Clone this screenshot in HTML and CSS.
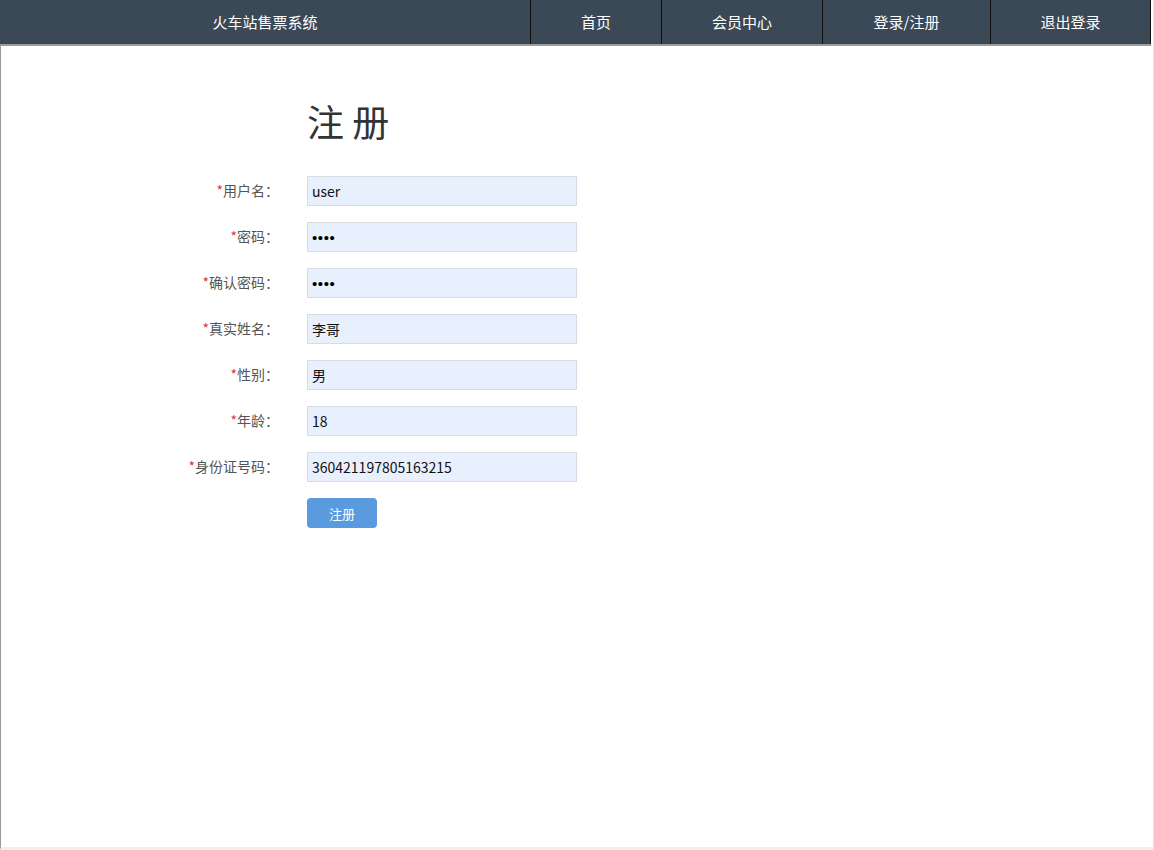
FILE: index.html
```html
<!DOCTYPE html>
<html lang="zh-CN">
<head>
<meta charset="utf-8">
<title>火车站售票系统</title>
<link rel="stylesheet" href="styles.css">
</head>
<body>
<div class="frame">
  <header class="topbar">
    <div class="brand">火车站售票系统</div>
    <nav class="nav">
      <a class="nav-item w-home">首页</a>
      <a class="nav-item w-member">会员中心</a>
      <a class="nav-item w-login">登录/注册</a>
      <a class="nav-item w-logout">退出登录</a>
    </nav>
  </header>
  <main class="content">
    <h1 class="title">注 册</h1>
    <form class="form">
      <div class="row"><label class="label"><span class="req">*</span>用户名：</label><input class="field" type="text" value="user"></div>
      <div class="row"><label class="label"><span class="req">*</span>密码：</label><input class="field pw" type="password" value="1234"></div>
      <div class="row"><label class="label"><span class="req">*</span>确认密码：</label><input class="field pw" type="password" value="1234"></div>
      <div class="row"><label class="label"><span class="req">*</span>真实姓名：</label><input class="field" type="text" value="李哥"></div>
      <div class="row"><label class="label"><span class="req">*</span>性别：</label><input class="field" type="text" value="男"></div>
      <div class="row"><label class="label"><span class="req">*</span>年龄：</label><input class="field" type="text" value="18"></div>
      <div class="row"><label class="label"><span class="req">*</span>身份证号码：</label><input class="field" type="text" value="360421197805163215"></div>
      <div class="row"><span class="label"></span><button class="btn" type="button">注册</button></div>
    </form>
  </main>
</div>
</body>
</html>
```

FILE: styles.css
```css
* { box-sizing: border-box; }
html, body { margin: 0; padding: 0; background: #fff; }
body {
  font-family: "Noto Sans CJK SC", "Noto Sans", sans-serif;
  width: 1154px;
  height: 850px;
  overflow: hidden;
}
.frame {
  width: 1154px;
  height: 850px;
  border-left: 1px solid #9a9a9a;
  border-right: 1px solid #e4e4e4;
  border-bottom: 3px solid #efefef;
  display: flex;
  flex-direction: column;
}
.topbar {
  display: flex;
  height: 46px;
  width: 1151px;
  margin-left: -1px;
  background: #3b4855;
  border-bottom: 2px solid #9c9c9c;
  color: #fff;
  font-size: 15px;
  flex-shrink: 0;
}
.brand {
  width: 530px;
  display: flex;
  align-items: center;
  justify-content: center;
  padding-bottom: 1px;
}
.nav { display: flex; flex: 1; border-right: 1px solid #111; }
.nav-item {
  display: flex;
  align-items: center;
  justify-content: center;
  border-left: 1px solid #111;
  color: #fff;
  text-decoration: none;
  padding-bottom: 1px;
}
.w-home { width: 131px; }
.w-member { width: 161px; }
.w-login { width: 168px; }
.w-logout { flex: 1; }
.content { padding-top: 49px; }
.title {
  margin: 0 0 29px 306px;
  font-size: 37px;
  font-weight: 400;
  color: #333;
  line-height: 52px;
  letter-spacing: 0;
}
.form { display: flex; flex-direction: column; gap: 16px; }
.row { display: flex; align-items: center; height: 30px; }
.label {
  width: 278px;
  text-align: right;
  font-size: 14px;
  color: #555;
  margin-right: 28px;
  margin-top: -2px;
}
.req { color: #e0333c; }
.field {
  width: 270px;
  height: 30px;
  border: 1px solid #d6dce3;
  background: #e8f0fe;
  font-family: "Noto Sans CJK SC", "Noto Sans", sans-serif;
  font-size: 14px;
  color: #111;
  padding: 0 4px;
  outline: none;
}
.field.pw {
  font-family: "Liberation Sans", sans-serif;
  font-size: 15px;
  letter-spacing: 0.6px;
  color: #000;
}
.btn {
  width: 70px;
  height: 30px;
  border: 0;
  border-radius: 4px;
  background: #5a9ade;
  color: #fff;
  font-family: "Noto Sans CJK SC", "Noto Sans", sans-serif;
  font-size: 13px;
  padding: 0;
}
```
